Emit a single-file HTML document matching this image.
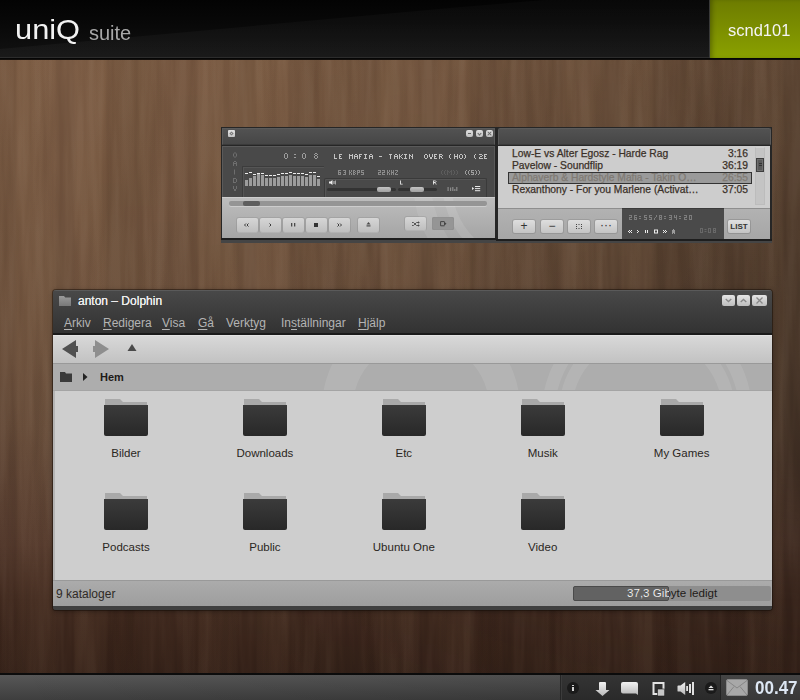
<!DOCTYPE html>
<html><head><meta charset="utf-8">
<style>
*{margin:0;padding:0;box-sizing:border-box}
html,body{width:800px;height:700px;overflow:hidden;background:#3a2a20;font-family:"Liberation Sans",sans-serif}
.a{position:absolute}
#top{left:0;top:0;width:800px;height:58px;overflow:hidden;background:linear-gradient(#030303,#080808 40%,#121212);}
#top .sheen{left:0;top:0;width:711px;height:57px;clip-path:polygon(0 49px,450px 8px,711px -14px,711px 57px,0 57px);background:linear-gradient(rgba(255,255,255,0.02),rgba(255,255,255,0.035))}
#topline{left:0;top:57px;width:800px;height:3px;background:linear-gradient(#2c2c2c 0,#2c2c2c 33%,#060606 34%,#060606 80%,rgba(6,6,6,0.4) 100%)}
#green{left:709px;top:0;width:91px;height:58px;background:linear-gradient(#6d7c00,#8aa100);border-left:1px solid #383838;box-shadow:inset 4px 0 5px -2px rgba(0,0,0,0.3)}
#wood{left:0;top:58px;width:800px;height:616px;background:linear-gradient(to bottom,rgb(122,91,67) 0%,rgb(111,83,62) 42%,rgb(101,75,57) 60%,rgb(84,58,45) 79%,rgb(66,43,32) 88%,rgb(58,37,27) 95%,rgb(53,34,25) 100%)}
#hshade{left:0;top:58px;width:800px;height:616px;background:linear-gradient(to right,#fff 0%,#f5f5f5 35%,#e6e6e6 55%,#cacaca 78%,#aaaaaa 100%);mix-blend-mode:multiply;-webkit-mask-image:linear-gradient(to bottom,rgba(0,0,0,0.75) 0%,#000 40%,#000 65%,rgba(0,0,0,0.25) 100%)}
#taskbar{left:0;top:673px;width:800px;height:27px;background:linear-gradient(to right,rgba(0,0,0,0) 0%,rgba(0,0,0,0.1) 70%),linear-gradient(#0c0c0c 0,#0c0c0c 1.5px,#575757 2px,#3e3e3e 100%)}
.menu{font-size:12px;color:#b4b4b4;line-height:16px}
.menu u{text-decoration:underline;text-underline-offset:2px}
.wb{width:13px;height:11px;border-radius:2px;background:linear-gradient(#e4e4e4,#bdbdbd)}
.lbl{width:100px;text-align:center;font-size:11.5px;color:#2a2622;line-height:14px;padding-top:1px}
.px{font-family:"Liberation Mono",monospace;font-weight:bold;line-height:10px}
.pbt{width:7px;height:7px;border-radius:2px;background:linear-gradient(#e0e0e0,#c0c0c0)}
.pb{top:218px;width:21px;height:14px;border-radius:2px;background:linear-gradient(#d6d6d6,#bfbfbf);box-shadow:0 0 0 1px rgba(0,0,0,0.08),0 1px 0 rgba(255,255,255,0.3);color:#444;font-size:10px;line-height:13px;text-align:center;font-weight:bold}
.pl{font-size:10.3px;line-height:12px;white-space:nowrap;padding-top:1px;-webkit-text-stroke:0.25px currentColor}
.qb{top:220px;width:22px;height:13px;border-radius:2px;background:linear-gradient(#dedede,#c4c4c4);box-shadow:0 0 0 1px rgba(0,0,0,0.1);color:#333;font-size:12px;line-height:13px;text-align:center}
</style></head><body>
<div id="wood" class="a"></div>
<div id="hshade" class="a"></div>
<svg class="a" style="left:0;top:58px;mix-blend-mode:soft-light;opacity:0.1" width="800" height="616"><filter id="wg" x="0" y="0" width="100%" height="100%" color-interpolation-filters="sRGB"><feTurbulence type="fractalNoise" baseFrequency="0.09 0.006" numOctaves="3" seed="7"/><feColorMatrix type="matrix" values="2.2 0 0 0 -0.6  2.2 0 0 0 -0.6  2.2 0 0 0 -0.6  0 0 0 0 1"/></filter><rect width="800" height="616" filter="url(#wg)"/></svg>
<div class="a" style="left:0;top:58px;width:800px;height:616px;background:repeating-linear-gradient(to right,rgba(40,20,8,0.03) 0px,rgba(40,20,8,0.03) 15px,rgba(230,180,130,0.03) 18px,rgba(230,180,130,0.03) 54px,rgba(0,0,0,0) 57px,rgba(0,0,0,0) 73px,rgba(230,180,130,0.035) 76px,rgba(230,180,130,0.035) 105px,rgba(40,20,8,0.045) 108px,rgba(40,20,8,0.045) 136px,rgba(40,20,8,0.012) 139px,rgba(40,20,8,0.012) 179px,rgba(40,20,8,0.03) 182px)"></div>
<div id="top" class="a"><div class="sheen a"></div></div>
<div id="topline" class="a"></div>
<div id="green" class="a"></div>
<div class="a" style="left:15px;top:13px;font-size:28px;color:#f2f2f2;line-height:34px;transform:scaleX(1.1);transform-origin:0 0">uniQ</div>
<div class="a" style="left:89px;top:21px;font-size:20px;color:#a8a8a8;line-height:24px">suite</div>
<div class="a" style="left:728px;top:19.5px;font-size:16.5px;color:#f4f4f4;line-height:20px">scnd101</div>



<!-- PLAYER MAIN -->
<div class="a" style="left:221px;top:127px;width:275px;height:114px;background:#262626"></div>
<div class="a" style="left:222px;top:128px;width:273px;height:17px;background:linear-gradient(#525252,#464646);border:1px solid #5a5a5a;border-bottom:1px solid #3a3a3a"></div>
<div class="a" style="left:228px;top:130px;width:7px;height:7px;background:linear-gradient(#e2e2e2,#c4c4c4);border-radius:1px"></div>
<div class="a" style="left:230px;top:132px;width:3px;height:3px;border:1px solid #777;transform:rotate(45deg)"></div>
<div class="a pbt" style="left:466px;top:130px"><div class="a" style="left:2px;top:3px;width:3px;height:1px;background:#666"></div></div>
<div class="a pbt" style="left:476px;top:130px"><div class="a" style="left:2px;top:2px;width:3px;height:3px;border-right:1px solid #666;border-bottom:1px solid #666;transform:rotate(45deg)"></div></div>
<div class="a pbt" style="left:486px;top:130px"><div class="a" style="left:1px;top:3px;width:5px;height:1px;background:#666;transform:rotate(45deg)"></div><div class="a" style="left:1px;top:3px;width:5px;height:1px;background:#666;transform:rotate(-45deg)"></div></div>
<div class="a" style="left:222px;top:146px;width:273px;height:51px;background:#494949;border:1px solid #5a5a5a;border-bottom:none"></div>
<div class="a" style="left:242px;top:166px;width:82px;height:31px;border-left:1px solid #3c3c3c;border-top:1px solid #3c3c3c"></div>
<div class="a" style="left:243px;top:167px;width:81px;height:30px;border-left:1px solid #555;border-top:1px solid #555"></div>
<div class="a" style="left:245px;top:180px;width:3px;height:6px;background:#9c9c9c"></div><div class="a" style="left:245px;top:173px;width:3px;height:1px;background:#eeeeee"></div><div class="a" style="left:249px;top:178px;width:3px;height:8px;background:#9c9c9c"></div><div class="a" style="left:249px;top:172px;width:3px;height:1px;background:#eeeeee"></div><div class="a" style="left:253px;top:176px;width:3px;height:10px;background:#9c9c9c"></div><div class="a" style="left:253px;top:174px;width:3px;height:1px;background:#eeeeee"></div><div class="a" style="left:257px;top:174px;width:3px;height:12px;background:#9c9c9c"></div><div class="a" style="left:257px;top:173px;width:3px;height:1px;background:#eeeeee"></div><div class="a" style="left:261px;top:175px;width:3px;height:11px;background:#9c9c9c"></div><div class="a" style="left:261px;top:173px;width:3px;height:1px;background:#eeeeee"></div><div class="a" style="left:265px;top:178px;width:3px;height:8px;background:#9c9c9c"></div><div class="a" style="left:265px;top:175px;width:3px;height:1px;background:#eeeeee"></div><div class="a" style="left:269px;top:178px;width:3px;height:8px;background:#9c9c9c"></div><div class="a" style="left:269px;top:175px;width:3px;height:1px;background:#eeeeee"></div><div class="a" style="left:273px;top:178px;width:3px;height:8px;background:#9c9c9c"></div><div class="a" style="left:273px;top:175px;width:3px;height:1px;background:#eeeeee"></div><div class="a" style="left:277px;top:177px;width:3px;height:9px;background:#9c9c9c"></div><div class="a" style="left:277px;top:174px;width:3px;height:1px;background:#eeeeee"></div><div class="a" style="left:281px;top:176px;width:3px;height:10px;background:#9c9c9c"></div><div class="a" style="left:281px;top:173px;width:3px;height:1px;background:#eeeeee"></div><div class="a" style="left:285px;top:176px;width:3px;height:10px;background:#9c9c9c"></div><div class="a" style="left:285px;top:173px;width:3px;height:1px;background:#eeeeee"></div><div class="a" style="left:289px;top:175px;width:3px;height:11px;background:#9c9c9c"></div><div class="a" style="left:289px;top:172px;width:3px;height:1px;background:#eeeeee"></div><div class="a" style="left:293px;top:176px;width:3px;height:10px;background:#9c9c9c"></div><div class="a" style="left:293px;top:173px;width:3px;height:1px;background:#eeeeee"></div><div class="a" style="left:297px;top:176px;width:3px;height:10px;background:#9c9c9c"></div><div class="a" style="left:297px;top:173px;width:3px;height:1px;background:#eeeeee"></div><div class="a" style="left:301px;top:176px;width:3px;height:10px;background:#9c9c9c"></div><div class="a" style="left:301px;top:173px;width:3px;height:1px;background:#eeeeee"></div><div class="a" style="left:305px;top:177px;width:3px;height:9px;background:#9c9c9c"></div><div class="a" style="left:305px;top:174px;width:3px;height:1px;background:#eeeeee"></div><div class="a" style="left:309px;top:175px;width:3px;height:11px;background:#9c9c9c"></div><div class="a" style="left:309px;top:172px;width:3px;height:1px;background:#eeeeee"></div><div class="a" style="left:313px;top:175px;width:3px;height:11px;background:#9c9c9c"></div><div class="a" style="left:313px;top:172px;width:3px;height:1px;background:#eeeeee"></div><div class="a" style="left:317px;top:179px;width:3px;height:7px;background:#9c9c9c"></div><div class="a" style="left:317px;top:176px;width:3px;height:1px;background:#eeeeee"></div>
<div class="a" style="left:324px;top:178px;width:163px;height:19px;border:1px solid #3a3a3a;border-bottom:none;border-radius:2px 2px 0 0;box-shadow:inset 1px 1px 0 #555"></div>
<svg class="a" style="left:329px;top:180px" width="7" height="5" viewBox="0 0 7 5"><path d="M0 1.5h1.5L3.5 0v5L1.5 3.5H0z" fill="#eee"/><rect x="4.5" y="1" width="1" height="3" fill="#ccc"/><rect x="6" y="0.5" width="1" height="4" fill="#aaa"/></svg>
<div class="a" style="left:327px;top:188px;width:69px;height:3px;background:#333;border-radius:2px"></div>
<div class="a" style="left:398px;top:188px;width:39px;height:3px;background:#333;border-radius:2px"></div>
<div class="a" style="left:377px;top:187px;width:14px;height:5px;background:linear-gradient(#c4c4c4,#a0a0a0);border-radius:2px"></div>
<div class="a" style="left:410px;top:187px;width:14px;height:5px;background:linear-gradient(#c4c4c4,#a0a0a0);border-radius:2px"></div>
<svg class="a" style="left:447px;top:186px" width="11" height="6" viewBox="0 0 11 6"><path d="M0.5 1h1.2v4H0.5zM3 1.5h1.2v3.5H3zM5.2 1h1.2v4H5.2zM7.2 3h1.2v2H7.2zM9.2 1h1.2v4H9.2z" fill="#8c8c8c"/></svg>
<svg class="a" style="left:472px;top:186px" width="9" height="6" viewBox="0 0 9 6"><path d="M0 1L2.2 2.5L0 4z" fill="#e8e8e8"/><rect x="3" y="0" width="5.2" height="1" fill="#e8e8e8"/><rect x="3" y="2.1" width="5.2" height="1" fill="#e8e8e8"/><rect x="3" y="4.2" width="5.2" height="1" fill="#e8e8e8"/></svg>
<div class="a" style="left:222px;top:197px;width:273px;height:41px;background:linear-gradient(#bdbdbd,#a5a5a5);border-top:1px solid #cdcdcd;overflow:hidden">
  <div class="a" style="left:191px;top:-137px;width:240px;height:240px;border-radius:50%;border:18px solid rgba(255,255,255,0.08)"></div>
  <div class="a" style="left:220px;top:-108px;width:182px;height:182px;border-radius:50%;border:9px solid rgba(255,255,255,0.1)"></div>
</div>
<div class="a" style="left:229px;top:201px;width:258px;height:5px;background:#959595;border-radius:2px;box-shadow:0 1px 0 rgba(255,255,255,0.3)"></div>
<div class="a" style="left:243px;top:201px;width:17px;height:5px;background:#5e5e5e;border-radius:2px"></div>
<div class="a pb" style="left:237px;top:218px;width:21px;height:14px;background:linear-gradient(#d6d6d6,#bfbfbf)"><svg class="a" style="left:0;top:0" width="21" height="14" viewBox="0 0 21 14"><path d="M9 5.5L7.5 7L9 8.5M11.5 5.5L10 7L11.5 8.5" stroke="#3a3a3a" stroke-width="1" fill="none"/></svg></div>
<div class="a pb" style="left:260px;top:218px;width:21px;height:14px;background:linear-gradient(#d6d6d6,#bfbfbf)"><svg class="a" style="left:0;top:0" width="21" height="14" viewBox="0 0 21 14"><path d="M9.5 5.5L11 7L9.5 8.5" stroke="#3a3a3a" stroke-width="1" fill="none"/></svg></div>
<div class="a pb" style="left:283px;top:218px;width:21px;height:14px;background:linear-gradient(#d6d6d6,#bfbfbf)"><svg class="a" style="left:0;top:0" width="21" height="14" viewBox="0 0 21 14"><rect x="8" y="5" width="1.3" height="3.5" fill="#4a4a4a"/><rect x="11" y="5" width="1.3" height="3.5" fill="#4a4a4a"/></svg></div>
<div class="a pb" style="left:306px;top:218px;width:21px;height:14px;background:linear-gradient(#d6d6d6,#bfbfbf)"><svg class="a" style="left:0;top:0" width="21" height="14" viewBox="0 0 21 14"><rect x="8" y="5" width="4" height="4" fill="#333"/></svg></div>
<div class="a pb" style="left:329px;top:218px;width:21px;height:14px;background:linear-gradient(#d6d6d6,#bfbfbf)"><svg class="a" style="left:0;top:0" width="21" height="14" viewBox="0 0 21 14"><path d="M8.5 5.5L10 7L8.5 8.5M11 5.5L12.5 7L11 8.5" stroke="#3a3a3a" stroke-width="1" fill="none"/></svg></div>
<div class="a pb" style="left:358px;top:218px;width:21px;height:14px;background:linear-gradient(#d6d6d6,#bfbfbf)"><svg class="a" style="left:0;top:0" width="21" height="14" viewBox="0 0 21 14"><path d="M10.5 4L12.5 6.5H8.5z" fill="#4a4a4a"/><rect x="8.5" y="7.3" width="4" height="1.2" fill="#4a4a4a"/></svg></div>
<div class="a pb" style="left:405px;top:217px;width:21px;height:13px;background:linear-gradient(#d6d6d6,#bfbfbf)"><svg class="a" style="left:0;top:0" width="21" height="13" viewBox="0 0 21 13"><path d="M7 5.5h1.5l3 3H14M7 8.5h1.5l3-3H14" stroke="#4a4a4a" stroke-width="0.9" fill="none"/><path d="M13 4.2l1.8 1.3-1.8 1.3zM13 7.2l1.8 1.3-1.8 1.3z" fill="#4a4a4a"/></svg></div>
<div class="a" style="left:432px;top:217px;width:22px;height:13px;background:#959595;border-radius:2px;box-shadow:inset 0 0 1px rgba(0,0,0,0.25)"><svg class="a" style="left:0;top:0" width="22" height="13" viewBox="0 0 22 13"><path d="M12.5 4.6H8.6v4.2h3.9" stroke="#444" stroke-width="1" fill="none"/><path d="M12 4.6v4.2l2.5-2.1z" fill="#444"/></svg></div>
<div class="a" style="left:221px;top:238px;width:275px;height:2px;background:#1e1e1e"></div><div class="a" style="left:221px;top:240px;width:275px;height:2.5px;background:#454545"></div>


<svg class="a" style="left:0;top:0;pointer-events:none" width="800" height="700"><path d="M234.00 152.50h1.00v1.00h-1.00zM235.00 152.50h1.00v1.00h-1.00zM233.00 153.50h1.00v1.00h-1.00zM236.00 153.50h1.00v1.00h-1.00zM233.00 154.50h1.00v1.00h-1.00zM236.00 154.50h1.00v1.00h-1.00zM233.00 155.50h1.00v1.00h-1.00zM236.00 155.50h1.00v1.00h-1.00zM234.00 156.50h1.00v1.00h-1.00zM235.00 156.50h1.00v1.00h-1.00z" fill="#6e6e6e" fill-opacity="1"/><path d="M234.00 161.00h1.00v1.00h-1.00zM235.00 161.00h1.00v1.00h-1.00zM233.00 162.00h1.00v1.00h-1.00zM236.00 162.00h1.00v1.00h-1.00zM233.00 163.00h1.00v1.00h-1.00zM234.00 163.00h1.00v1.00h-1.00zM235.00 163.00h1.00v1.00h-1.00zM236.00 163.00h1.00v1.00h-1.00zM233.00 164.00h1.00v1.00h-1.00zM236.00 164.00h1.00v1.00h-1.00zM233.00 165.00h1.00v1.00h-1.00zM236.00 165.00h1.00v1.00h-1.00z" fill="#6e6e6e" fill-opacity="1"/><path d="M234.00 169.50h1.00v1.00h-1.00zM234.00 170.50h1.00v1.00h-1.00zM234.00 171.50h1.00v1.00h-1.00zM234.00 172.50h1.00v1.00h-1.00zM234.00 173.50h1.00v1.00h-1.00z" fill="#6e6e6e" fill-opacity="1"/><path d="M233.00 178.00h1.00v1.00h-1.00zM234.00 178.00h1.00v1.00h-1.00zM235.00 178.00h1.00v1.00h-1.00zM233.00 179.00h1.00v1.00h-1.00zM236.00 179.00h1.00v1.00h-1.00zM233.00 180.00h1.00v1.00h-1.00zM236.00 180.00h1.00v1.00h-1.00zM233.00 181.00h1.00v1.00h-1.00zM236.00 181.00h1.00v1.00h-1.00zM233.00 182.00h1.00v1.00h-1.00zM234.00 182.00h1.00v1.00h-1.00zM235.00 182.00h1.00v1.00h-1.00z" fill="#6e6e6e" fill-opacity="1"/><path d="M233.00 186.00h1.00v1.00h-1.00zM236.00 186.00h1.00v1.00h-1.00zM233.00 187.00h1.00v1.00h-1.00zM236.00 187.00h1.00v1.00h-1.00zM233.00 188.00h1.00v1.00h-1.00zM236.00 188.00h1.00v1.00h-1.00zM234.00 189.00h1.00v1.00h-1.00zM235.00 189.00h1.00v1.00h-1.00zM234.00 190.00h1.00v1.00h-1.00zM235.00 190.00h1.00v1.00h-1.00z" fill="#6e6e6e" fill-opacity="1"/><path d="M285.00 153.00h1.00v1.00h-1.00zM286.00 153.00h1.00v1.00h-1.00zM284.00 154.00h1.00v1.00h-1.00zM287.00 154.00h1.00v1.00h-1.00zM284.00 155.00h1.00v1.00h-1.00zM287.00 155.00h1.00v1.00h-1.00zM284.00 156.00h1.00v1.00h-1.00zM287.00 156.00h1.00v1.00h-1.00zM284.00 157.00h1.00v1.00h-1.00zM287.00 157.00h1.00v1.00h-1.00zM285.00 158.00h1.00v1.00h-1.00zM286.00 158.00h1.00v1.00h-1.00z" fill="#9c9c9c" fill-opacity="1"/><path d="M294.00 154.00h1.00v1.00h-1.00zM295.00 154.00h1.00v1.00h-1.00zM294.00 157.00h1.00v1.00h-1.00zM295.00 157.00h1.00v1.00h-1.00z" fill="#9c9c9c" fill-opacity="1"/><path d="M303.00 153.00h1.00v1.00h-1.00zM304.00 153.00h1.00v1.00h-1.00zM302.00 154.00h1.00v1.00h-1.00zM305.00 154.00h1.00v1.00h-1.00zM302.00 155.00h1.00v1.00h-1.00zM305.00 155.00h1.00v1.00h-1.00zM302.00 156.00h1.00v1.00h-1.00zM305.00 156.00h1.00v1.00h-1.00zM302.00 157.00h1.00v1.00h-1.00zM305.00 157.00h1.00v1.00h-1.00zM303.00 158.00h1.00v1.00h-1.00zM304.00 158.00h1.00v1.00h-1.00z" fill="#9c9c9c" fill-opacity="1"/><path d="M315.00 153.00h1.00v1.00h-1.00zM316.00 153.00h1.00v1.00h-1.00zM314.00 154.00h1.00v1.00h-1.00zM317.00 154.00h1.00v1.00h-1.00zM315.00 155.00h1.00v1.00h-1.00zM316.00 155.00h1.00v1.00h-1.00zM314.00 156.00h1.00v1.00h-1.00zM317.00 156.00h1.00v1.00h-1.00zM314.00 157.00h1.00v1.00h-1.00zM317.00 157.00h1.00v1.00h-1.00zM315.00 158.00h1.00v1.00h-1.00zM316.00 158.00h1.00v1.00h-1.00z" fill="#9c9c9c" fill-opacity="1"/><path d="M334.00 154.00h1.00v1.00h-1.00zM334.00 155.00h1.00v1.00h-1.00zM334.00 156.00h1.00v1.00h-1.00zM334.00 157.00h1.00v1.00h-1.00zM334.00 158.00h1.00v1.00h-1.00zM335.00 158.00h1.00v1.00h-1.00zM336.00 158.00h1.00v1.00h-1.00zM339.00 154.00h1.00v1.00h-1.00zM340.00 154.00h1.00v1.00h-1.00zM341.00 154.00h1.00v1.00h-1.00zM339.00 155.00h1.00v1.00h-1.00zM339.00 156.00h1.00v1.00h-1.00zM340.00 156.00h1.00v1.00h-1.00zM339.00 157.00h1.00v1.00h-1.00zM339.00 158.00h1.00v1.00h-1.00zM340.00 158.00h1.00v1.00h-1.00zM341.00 158.00h1.00v1.00h-1.00zM349.00 154.00h1.00v1.00h-1.00zM352.00 154.00h1.00v1.00h-1.00zM349.00 155.00h1.00v1.00h-1.00zM350.00 155.00h1.00v1.00h-1.00zM351.00 155.00h1.00v1.00h-1.00zM352.00 155.00h1.00v1.00h-1.00zM349.00 156.00h1.00v1.00h-1.00zM352.00 156.00h1.00v1.00h-1.00zM349.00 157.00h1.00v1.00h-1.00zM352.00 157.00h1.00v1.00h-1.00zM349.00 158.00h1.00v1.00h-1.00zM352.00 158.00h1.00v1.00h-1.00zM355.00 154.00h1.00v1.00h-1.00zM356.00 154.00h1.00v1.00h-1.00zM354.00 155.00h1.00v1.00h-1.00zM357.00 155.00h1.00v1.00h-1.00zM354.00 156.00h1.00v1.00h-1.00zM355.00 156.00h1.00v1.00h-1.00zM356.00 156.00h1.00v1.00h-1.00zM357.00 156.00h1.00v1.00h-1.00zM354.00 157.00h1.00v1.00h-1.00zM357.00 157.00h1.00v1.00h-1.00zM354.00 158.00h1.00v1.00h-1.00zM357.00 158.00h1.00v1.00h-1.00zM359.00 154.00h1.00v1.00h-1.00zM360.00 154.00h1.00v1.00h-1.00zM361.00 154.00h1.00v1.00h-1.00zM359.00 155.00h1.00v1.00h-1.00zM359.00 156.00h1.00v1.00h-1.00zM360.00 156.00h1.00v1.00h-1.00zM359.00 157.00h1.00v1.00h-1.00zM359.00 158.00h1.00v1.00h-1.00zM364.00 154.00h1.00v1.00h-1.00zM365.00 154.00h1.00v1.00h-1.00zM366.00 154.00h1.00v1.00h-1.00zM365.00 155.00h1.00v1.00h-1.00zM365.00 156.00h1.00v1.00h-1.00zM365.00 157.00h1.00v1.00h-1.00zM364.00 158.00h1.00v1.00h-1.00zM365.00 158.00h1.00v1.00h-1.00zM366.00 158.00h1.00v1.00h-1.00zM370.00 154.00h1.00v1.00h-1.00zM371.00 154.00h1.00v1.00h-1.00zM369.00 155.00h1.00v1.00h-1.00zM372.00 155.00h1.00v1.00h-1.00zM369.00 156.00h1.00v1.00h-1.00zM370.00 156.00h1.00v1.00h-1.00zM371.00 156.00h1.00v1.00h-1.00zM372.00 156.00h1.00v1.00h-1.00zM369.00 157.00h1.00v1.00h-1.00zM372.00 157.00h1.00v1.00h-1.00zM369.00 158.00h1.00v1.00h-1.00zM372.00 158.00h1.00v1.00h-1.00zM379.00 156.00h1.00v1.00h-1.00zM380.00 156.00h1.00v1.00h-1.00zM381.00 156.00h1.00v1.00h-1.00zM389.00 154.00h1.00v1.00h-1.00zM390.00 154.00h1.00v1.00h-1.00zM391.00 154.00h1.00v1.00h-1.00zM390.00 155.00h1.00v1.00h-1.00zM390.00 156.00h1.00v1.00h-1.00zM390.00 157.00h1.00v1.00h-1.00zM390.00 158.00h1.00v1.00h-1.00zM395.00 154.00h1.00v1.00h-1.00zM396.00 154.00h1.00v1.00h-1.00zM394.00 155.00h1.00v1.00h-1.00zM397.00 155.00h1.00v1.00h-1.00zM394.00 156.00h1.00v1.00h-1.00zM395.00 156.00h1.00v1.00h-1.00zM396.00 156.00h1.00v1.00h-1.00zM397.00 156.00h1.00v1.00h-1.00zM394.00 157.00h1.00v1.00h-1.00zM397.00 157.00h1.00v1.00h-1.00zM394.00 158.00h1.00v1.00h-1.00zM397.00 158.00h1.00v1.00h-1.00zM399.00 154.00h1.00v1.00h-1.00zM402.00 154.00h1.00v1.00h-1.00zM399.00 155.00h1.00v1.00h-1.00zM401.00 155.00h1.00v1.00h-1.00zM399.00 156.00h1.00v1.00h-1.00zM400.00 156.00h1.00v1.00h-1.00zM399.00 157.00h1.00v1.00h-1.00zM401.00 157.00h1.00v1.00h-1.00zM399.00 158.00h1.00v1.00h-1.00zM402.00 158.00h1.00v1.00h-1.00zM404.00 154.00h1.00v1.00h-1.00zM405.00 154.00h1.00v1.00h-1.00zM406.00 154.00h1.00v1.00h-1.00zM405.00 155.00h1.00v1.00h-1.00zM405.00 156.00h1.00v1.00h-1.00zM405.00 157.00h1.00v1.00h-1.00zM404.00 158.00h1.00v1.00h-1.00zM405.00 158.00h1.00v1.00h-1.00zM406.00 158.00h1.00v1.00h-1.00zM409.00 154.00h1.00v1.00h-1.00zM412.00 154.00h1.00v1.00h-1.00zM409.00 155.00h1.00v1.00h-1.00zM410.00 155.00h1.00v1.00h-1.00zM412.00 155.00h1.00v1.00h-1.00zM409.00 156.00h1.00v1.00h-1.00zM411.00 156.00h1.00v1.00h-1.00zM412.00 156.00h1.00v1.00h-1.00zM409.00 157.00h1.00v1.00h-1.00zM412.00 157.00h1.00v1.00h-1.00zM409.00 158.00h1.00v1.00h-1.00zM412.00 158.00h1.00v1.00h-1.00zM425.00 154.00h1.00v1.00h-1.00zM426.00 154.00h1.00v1.00h-1.00zM424.00 155.00h1.00v1.00h-1.00zM427.00 155.00h1.00v1.00h-1.00zM424.00 156.00h1.00v1.00h-1.00zM427.00 156.00h1.00v1.00h-1.00zM424.00 157.00h1.00v1.00h-1.00zM427.00 157.00h1.00v1.00h-1.00zM425.00 158.00h1.00v1.00h-1.00zM426.00 158.00h1.00v1.00h-1.00zM429.00 154.00h1.00v1.00h-1.00zM432.00 154.00h1.00v1.00h-1.00zM429.00 155.00h1.00v1.00h-1.00zM432.00 155.00h1.00v1.00h-1.00zM429.00 156.00h1.00v1.00h-1.00zM432.00 156.00h1.00v1.00h-1.00zM430.00 157.00h1.00v1.00h-1.00zM431.00 157.00h1.00v1.00h-1.00zM430.00 158.00h1.00v1.00h-1.00zM431.00 158.00h1.00v1.00h-1.00zM434.00 154.00h1.00v1.00h-1.00zM435.00 154.00h1.00v1.00h-1.00zM436.00 154.00h1.00v1.00h-1.00zM434.00 155.00h1.00v1.00h-1.00zM434.00 156.00h1.00v1.00h-1.00zM435.00 156.00h1.00v1.00h-1.00zM434.00 157.00h1.00v1.00h-1.00zM434.00 158.00h1.00v1.00h-1.00zM435.00 158.00h1.00v1.00h-1.00zM436.00 158.00h1.00v1.00h-1.00zM439.00 154.00h1.00v1.00h-1.00zM440.00 154.00h1.00v1.00h-1.00zM441.00 154.00h1.00v1.00h-1.00zM439.00 155.00h1.00v1.00h-1.00zM442.00 155.00h1.00v1.00h-1.00zM439.00 156.00h1.00v1.00h-1.00zM440.00 156.00h1.00v1.00h-1.00zM441.00 156.00h1.00v1.00h-1.00zM439.00 157.00h1.00v1.00h-1.00zM441.00 157.00h1.00v1.00h-1.00zM439.00 158.00h1.00v1.00h-1.00zM442.00 158.00h1.00v1.00h-1.00zM450.00 154.00h1.00v1.00h-1.00zM449.00 155.00h1.00v1.00h-1.00zM449.00 156.00h1.00v1.00h-1.00zM449.00 157.00h1.00v1.00h-1.00zM450.00 158.00h1.00v1.00h-1.00zM454.00 154.00h1.00v1.00h-1.00zM457.00 154.00h1.00v1.00h-1.00zM454.00 155.00h1.00v1.00h-1.00zM457.00 155.00h1.00v1.00h-1.00zM454.00 156.00h1.00v1.00h-1.00zM455.00 156.00h1.00v1.00h-1.00zM456.00 156.00h1.00v1.00h-1.00zM457.00 156.00h1.00v1.00h-1.00zM454.00 157.00h1.00v1.00h-1.00zM457.00 157.00h1.00v1.00h-1.00zM454.00 158.00h1.00v1.00h-1.00zM457.00 158.00h1.00v1.00h-1.00zM460.00 154.00h1.00v1.00h-1.00zM461.00 154.00h1.00v1.00h-1.00zM459.00 155.00h1.00v1.00h-1.00zM462.00 155.00h1.00v1.00h-1.00zM459.00 156.00h1.00v1.00h-1.00zM462.00 156.00h1.00v1.00h-1.00zM459.00 157.00h1.00v1.00h-1.00zM462.00 157.00h1.00v1.00h-1.00zM460.00 158.00h1.00v1.00h-1.00zM461.00 158.00h1.00v1.00h-1.00zM464.00 154.00h1.00v1.00h-1.00zM465.00 155.00h1.00v1.00h-1.00zM465.00 156.00h1.00v1.00h-1.00zM465.00 157.00h1.00v1.00h-1.00zM464.00 158.00h1.00v1.00h-1.00zM475.00 154.00h1.00v1.00h-1.00zM474.00 155.00h1.00v1.00h-1.00zM474.00 156.00h1.00v1.00h-1.00zM474.00 157.00h1.00v1.00h-1.00zM475.00 158.00h1.00v1.00h-1.00zM479.00 154.00h1.00v1.00h-1.00zM480.00 154.00h1.00v1.00h-1.00zM481.00 154.00h1.00v1.00h-1.00zM482.00 155.00h1.00v1.00h-1.00zM480.00 156.00h1.00v1.00h-1.00zM481.00 156.00h1.00v1.00h-1.00zM479.00 157.00h1.00v1.00h-1.00zM479.00 158.00h1.00v1.00h-1.00zM480.00 158.00h1.00v1.00h-1.00zM481.00 158.00h1.00v1.00h-1.00zM482.00 158.00h1.00v1.00h-1.00zM484.00 154.00h1.00v1.00h-1.00zM485.00 154.00h1.00v1.00h-1.00zM486.00 154.00h1.00v1.00h-1.00zM484.00 155.00h1.00v1.00h-1.00zM484.00 156.00h1.00v1.00h-1.00zM485.00 156.00h1.00v1.00h-1.00zM484.00 157.00h1.00v1.00h-1.00zM484.00 158.00h1.00v1.00h-1.00zM485.00 158.00h1.00v1.00h-1.00zM486.00 158.00h1.00v1.00h-1.00z" fill="#c2c2c2" fill-opacity="1"/><path d="M338.00 170.00h1.00v1.00h-1.00zM339.00 170.00h1.00v1.00h-1.00zM340.00 170.00h1.00v1.00h-1.00zM338.00 171.00h1.00v1.00h-1.00zM338.00 172.00h1.00v1.00h-1.00zM339.00 172.00h1.00v1.00h-1.00zM340.00 172.00h1.00v1.00h-1.00zM338.00 173.00h1.00v1.00h-1.00zM340.00 173.00h1.00v1.00h-1.00zM338.00 174.00h1.00v1.00h-1.00zM339.00 174.00h1.00v1.00h-1.00zM340.00 174.00h1.00v1.00h-1.00z" fill="#8a8a8a" fill-opacity="1"/><path d="M343.00 170.00h1.00v1.00h-1.00zM344.00 170.00h1.00v1.00h-1.00zM345.00 170.00h1.00v1.00h-1.00zM345.00 171.00h1.00v1.00h-1.00zM344.00 172.00h1.00v1.00h-1.00zM345.00 172.00h1.00v1.00h-1.00zM345.00 173.00h1.00v1.00h-1.00zM343.00 174.00h1.00v1.00h-1.00zM344.00 174.00h1.00v1.00h-1.00zM345.00 174.00h1.00v1.00h-1.00z" fill="#8a8a8a" fill-opacity="1"/><path d="M349.00 170.00h1.00v1.00h-1.00zM351.00 170.00h1.00v1.00h-1.00zM349.00 171.00h1.00v1.00h-1.00zM351.00 171.00h1.00v1.00h-1.00zM349.00 172.00h1.00v1.00h-1.00zM350.00 172.00h1.00v1.00h-1.00zM349.00 173.00h1.00v1.00h-1.00zM351.00 173.00h1.00v1.00h-1.00zM349.00 174.00h1.00v1.00h-1.00zM351.00 174.00h1.00v1.00h-1.00z" fill="#8a8a8a" fill-opacity="1"/><path d="M353.00 170.00h1.00v1.00h-1.00zM354.00 170.00h1.00v1.00h-1.00zM353.00 171.00h1.00v1.00h-1.00zM355.00 171.00h1.00v1.00h-1.00zM353.00 172.00h1.00v1.00h-1.00zM354.00 172.00h1.00v1.00h-1.00zM353.00 173.00h1.00v1.00h-1.00zM355.00 173.00h1.00v1.00h-1.00zM353.00 174.00h1.00v1.00h-1.00zM354.00 174.00h1.00v1.00h-1.00z" fill="#8a8a8a" fill-opacity="1"/><path d="M357.00 170.00h1.00v1.00h-1.00zM358.00 170.00h1.00v1.00h-1.00zM359.00 170.00h1.00v1.00h-1.00zM357.00 171.00h1.00v1.00h-1.00zM359.00 171.00h1.00v1.00h-1.00zM357.00 172.00h1.00v1.00h-1.00zM358.00 172.00h1.00v1.00h-1.00zM359.00 172.00h1.00v1.00h-1.00zM357.00 173.00h1.00v1.00h-1.00zM357.00 174.00h1.00v1.00h-1.00z" fill="#8a8a8a" fill-opacity="1"/><path d="M361.00 170.00h1.00v1.00h-1.00zM362.00 170.00h1.00v1.00h-1.00zM363.00 170.00h1.00v1.00h-1.00zM361.00 171.00h1.00v1.00h-1.00zM361.00 172.00h1.00v1.00h-1.00zM362.00 172.00h1.00v1.00h-1.00zM363.00 172.00h1.00v1.00h-1.00zM363.00 173.00h1.00v1.00h-1.00zM361.00 174.00h1.00v1.00h-1.00zM362.00 174.00h1.00v1.00h-1.00zM363.00 174.00h1.00v1.00h-1.00z" fill="#8a8a8a" fill-opacity="1"/><path d="M378.00 170.00h1.00v1.00h-1.00zM379.00 170.00h1.00v1.00h-1.00zM380.00 170.00h1.00v1.00h-1.00zM380.00 171.00h1.00v1.00h-1.00zM378.00 172.00h1.00v1.00h-1.00zM379.00 172.00h1.00v1.00h-1.00zM380.00 172.00h1.00v1.00h-1.00zM378.00 173.00h1.00v1.00h-1.00zM378.00 174.00h1.00v1.00h-1.00zM379.00 174.00h1.00v1.00h-1.00zM380.00 174.00h1.00v1.00h-1.00z" fill="#8a8a8a" fill-opacity="1"/><path d="M382.00 170.00h1.00v1.00h-1.00zM383.00 170.00h1.00v1.00h-1.00zM384.00 170.00h1.00v1.00h-1.00zM384.00 171.00h1.00v1.00h-1.00zM382.00 172.00h1.00v1.00h-1.00zM383.00 172.00h1.00v1.00h-1.00zM384.00 172.00h1.00v1.00h-1.00zM382.00 173.00h1.00v1.00h-1.00zM382.00 174.00h1.00v1.00h-1.00zM383.00 174.00h1.00v1.00h-1.00zM384.00 174.00h1.00v1.00h-1.00z" fill="#8a8a8a" fill-opacity="1"/><path d="M387.00 170.00h1.00v1.00h-1.00zM389.00 170.00h1.00v1.00h-1.00zM387.00 171.00h1.00v1.00h-1.00zM389.00 171.00h1.00v1.00h-1.00zM387.00 172.00h1.00v1.00h-1.00zM388.00 172.00h1.00v1.00h-1.00zM387.00 173.00h1.00v1.00h-1.00zM389.00 173.00h1.00v1.00h-1.00zM387.00 174.00h1.00v1.00h-1.00zM389.00 174.00h1.00v1.00h-1.00z" fill="#8a8a8a" fill-opacity="1"/><path d="M391.00 170.00h1.00v1.00h-1.00zM393.00 170.00h1.00v1.00h-1.00zM391.00 171.00h1.00v1.00h-1.00zM393.00 171.00h1.00v1.00h-1.00zM391.00 172.00h1.00v1.00h-1.00zM392.00 172.00h1.00v1.00h-1.00zM393.00 172.00h1.00v1.00h-1.00zM391.00 173.00h1.00v1.00h-1.00zM393.00 173.00h1.00v1.00h-1.00zM391.00 174.00h1.00v1.00h-1.00zM393.00 174.00h1.00v1.00h-1.00z" fill="#8a8a8a" fill-opacity="1"/><path d="M395.00 170.00h1.00v1.00h-1.00zM396.00 170.00h1.00v1.00h-1.00zM397.00 170.00h1.00v1.00h-1.00zM397.00 171.00h1.00v1.00h-1.00zM396.00 172.00h1.00v1.00h-1.00zM395.00 173.00h1.00v1.00h-1.00zM395.00 174.00h1.00v1.00h-1.00zM396.00 174.00h1.00v1.00h-1.00zM397.00 174.00h1.00v1.00h-1.00z" fill="#8a8a8a" fill-opacity="1"/><path d="M442.00 170.00h1.00v1.00h-1.00zM441.00 171.00h1.00v1.00h-1.00zM441.00 172.00h1.00v1.00h-1.00zM441.00 173.00h1.00v1.00h-1.00zM442.00 174.00h1.00v1.00h-1.00z" fill="#5c5c5c" fill-opacity="1"/><path d="M445.00 170.00h1.00v1.00h-1.00zM444.00 171.00h1.00v1.00h-1.00zM444.00 172.00h1.00v1.00h-1.00zM444.00 173.00h1.00v1.00h-1.00zM445.00 174.00h1.00v1.00h-1.00z" fill="#5c5c5c" fill-opacity="1"/><path d="M447.00 170.00h1.00v1.00h-1.00zM451.00 170.00h1.00v1.00h-1.00zM447.00 171.00h1.00v1.00h-1.00zM448.00 171.00h1.00v1.00h-1.00zM450.00 171.00h1.00v1.00h-1.00zM451.00 171.00h1.00v1.00h-1.00zM447.00 172.00h1.00v1.00h-1.00zM449.00 172.00h1.00v1.00h-1.00zM451.00 172.00h1.00v1.00h-1.00zM447.00 173.00h1.00v1.00h-1.00zM451.00 173.00h1.00v1.00h-1.00zM447.00 174.00h1.00v1.00h-1.00zM451.00 174.00h1.00v1.00h-1.00z" fill="#5c5c5c" fill-opacity="1"/><path d="M453.00 170.00h1.00v1.00h-1.00zM454.00 171.00h1.00v1.00h-1.00zM454.00 172.00h1.00v1.00h-1.00zM454.00 173.00h1.00v1.00h-1.00zM453.00 174.00h1.00v1.00h-1.00z" fill="#5c5c5c" fill-opacity="1"/><path d="M456.00 170.00h1.00v1.00h-1.00zM457.00 171.00h1.00v1.00h-1.00zM457.00 172.00h1.00v1.00h-1.00zM457.00 173.00h1.00v1.00h-1.00zM456.00 174.00h1.00v1.00h-1.00z" fill="#5c5c5c" fill-opacity="1"/><path d="M466.00 170.00h1.00v1.00h-1.00zM465.00 171.00h1.00v1.00h-1.00zM465.00 172.00h1.00v1.00h-1.00zM465.00 173.00h1.00v1.00h-1.00zM466.00 174.00h1.00v1.00h-1.00z" fill="#9c9c9c" fill-opacity="1"/><path d="M469.00 170.00h1.00v1.00h-1.00zM468.00 171.00h1.00v1.00h-1.00zM468.00 172.00h1.00v1.00h-1.00zM468.00 173.00h1.00v1.00h-1.00zM469.00 174.00h1.00v1.00h-1.00z" fill="#9c9c9c" fill-opacity="1"/><path d="M471.00 170.00h1.00v1.00h-1.00zM472.00 170.00h1.00v1.00h-1.00zM473.00 170.00h1.00v1.00h-1.00zM471.00 171.00h1.00v1.00h-1.00zM471.00 172.00h1.00v1.00h-1.00zM472.00 172.00h1.00v1.00h-1.00zM473.00 172.00h1.00v1.00h-1.00zM473.00 173.00h1.00v1.00h-1.00zM471.00 174.00h1.00v1.00h-1.00zM472.00 174.00h1.00v1.00h-1.00zM473.00 174.00h1.00v1.00h-1.00z" fill="#9c9c9c" fill-opacity="1"/><path d="M475.00 170.00h1.00v1.00h-1.00zM476.00 171.00h1.00v1.00h-1.00zM476.00 172.00h1.00v1.00h-1.00zM476.00 173.00h1.00v1.00h-1.00zM475.00 174.00h1.00v1.00h-1.00z" fill="#9c9c9c" fill-opacity="1"/><path d="M478.00 170.00h1.00v1.00h-1.00zM479.00 171.00h1.00v1.00h-1.00zM479.00 172.00h1.00v1.00h-1.00zM479.00 173.00h1.00v1.00h-1.00zM478.00 174.00h1.00v1.00h-1.00z" fill="#9c9c9c" fill-opacity="1"/><path d="M400.00 180.50h0.90v0.80h-0.90zM400.00 181.30h0.90v0.80h-0.90zM400.00 182.10h0.90v0.80h-0.90zM400.00 182.90h0.90v0.80h-0.90zM400.00 183.70h0.90v0.80h-0.90zM400.90 183.70h0.90v0.80h-0.90zM401.80 183.70h0.90v0.80h-0.90z" fill="#e6e6e6" fill-opacity="1"/><path d="M433.00 180.50h0.90v0.80h-0.90zM433.90 180.50h0.90v0.80h-0.90zM434.80 180.50h0.90v0.80h-0.90zM433.00 181.30h0.90v0.80h-0.90zM435.70 181.30h0.90v0.80h-0.90zM433.00 182.10h0.90v0.80h-0.90zM433.90 182.10h0.90v0.80h-0.90zM434.80 182.10h0.90v0.80h-0.90zM433.00 182.90h0.90v0.80h-0.90zM434.80 182.90h0.90v0.80h-0.90zM433.00 183.70h0.90v0.80h-0.90zM435.70 183.70h0.90v0.80h-0.90z" fill="#e6e6e6" fill-opacity="1"/></svg>
<!-- PLAYLIST -->
<div class="a" style="left:496px;top:127px;width:276px;height:114px;background:#262626"></div>
<div class="a" style="left:498px;top:128px;width:273px;height:17px;background:linear-gradient(#525252,#464646);border:1px solid #5a5a5a;border-bottom:1px solid #3a3a3a;border-radius:2px 2px 0 0"></div>
<div class="a" style="left:498px;top:146px;width:272px;height:62px;background:#cdcdcd"></div>
<div class="a" style="left:755px;top:147px;width:10px;height:58px;background:#c4c4c4;border:1px solid #bcbcbc;border-top-color:#d0d0d0"></div>
<div class="a" style="left:756px;top:158px;width:8px;height:14px;background:#5a5a5a;border:1px solid #3e3e3e;box-shadow:inset 0 0 0 1px #6e6e6e"></div>
<div class="a" style="left:759px;top:163px;width:3px;height:3px;border-top:1px solid #333;border-bottom:1px solid #333"></div>
<div class="a" style="left:508px;top:172px;width:244px;height:12px;background:#9a9a9a;border:1px solid #333"></div>
<div class="a pl" style="left:512px;top:147px;color:#3a3028">Low-E vs Alter Egosz - Harde Rag</div><div class="a pl" style="left:699px;top:147px;width:49px;text-align:right;color:#3a3028">3:16</div>
<div class="a pl" style="left:512px;top:159px;color:#3a3028">Pavelow - Soundflip</div><div class="a pl" style="left:699px;top:159px;width:49px;text-align:right;color:#3a3028">36:19</div>
<div class="a pl" style="left:512px;top:171px;color:#807a74">Alphaverb &amp; Hardstyle Mafia - Takin O…</div><div class="a pl" style="left:699px;top:171px;width:49px;text-align:right;color:#807a74">26:55</div>
<div class="a pl" style="left:512px;top:183px;color:#3a3028">Rexanthony - For you Marlene (Activat…</div><div class="a pl" style="left:699px;top:183px;width:49px;text-align:right;color:#3a3028">37:05</div>

<div class="a" style="left:498px;top:207.5px;width:272px;height:31.5px;background:linear-gradient(#b2b2b2,#a6a6a6);border-top:1.5px solid #8e8e8e"></div>
<div class="a qb" style="left:513px">+</div>
<div class="a qb" style="left:541px">&minus;</div>
<div class="a qb" style="left:568px"><svg class="a" style="left:8px;top:4px" width="6" height="5" viewBox="0 0 6 5"><path d="M0 0h1v1H0zM2.5 0h1v1h-1zM5 0h1v1H5zM0 2h1v1H0zM5 2h1v1H5zM0 4h1v1H0zM2.5 4h1v1h-1zM5 4h1v1H5z" fill="#444"/></svg></div>
<div class="a qb" style="left:595px;line-height:10px">&middot;&middot;&middot;</div>
<div class="a" style="left:622px;top:208px;width:102px;height:31px;background:#4a4a4a;border-top:1px solid #3a3a3a"></div>
<svg class="a" style="left:0;top:0;pointer-events:none" width="800" height="700"><path d="M629.00 215.00h1.00v1.00h-1.00zM630.00 215.00h1.00v1.00h-1.00zM631.00 215.00h1.00v1.00h-1.00zM631.00 216.00h1.00v1.00h-1.00zM629.00 217.00h1.00v1.00h-1.00zM630.00 217.00h1.00v1.00h-1.00zM631.00 217.00h1.00v1.00h-1.00zM629.00 218.00h1.00v1.00h-1.00zM629.00 219.00h1.00v1.00h-1.00zM630.00 219.00h1.00v1.00h-1.00zM631.00 219.00h1.00v1.00h-1.00zM634.00 215.00h1.00v1.00h-1.00zM635.00 215.00h1.00v1.00h-1.00zM636.00 215.00h1.00v1.00h-1.00zM634.00 216.00h1.00v1.00h-1.00zM634.00 217.00h1.00v1.00h-1.00zM635.00 217.00h1.00v1.00h-1.00zM636.00 217.00h1.00v1.00h-1.00zM634.00 218.00h1.00v1.00h-1.00zM636.00 218.00h1.00v1.00h-1.00zM634.00 219.00h1.00v1.00h-1.00zM635.00 219.00h1.00v1.00h-1.00zM636.00 219.00h1.00v1.00h-1.00zM639.00 216.00h1.00v1.00h-1.00zM640.00 216.00h1.00v1.00h-1.00zM639.00 218.00h1.00v1.00h-1.00zM640.00 218.00h1.00v1.00h-1.00zM644.00 215.00h1.00v1.00h-1.00zM645.00 215.00h1.00v1.00h-1.00zM646.00 215.00h1.00v1.00h-1.00zM644.00 216.00h1.00v1.00h-1.00zM644.00 217.00h1.00v1.00h-1.00zM645.00 217.00h1.00v1.00h-1.00zM646.00 217.00h1.00v1.00h-1.00zM646.00 218.00h1.00v1.00h-1.00zM644.00 219.00h1.00v1.00h-1.00zM645.00 219.00h1.00v1.00h-1.00zM646.00 219.00h1.00v1.00h-1.00zM649.00 215.00h1.00v1.00h-1.00zM650.00 215.00h1.00v1.00h-1.00zM651.00 215.00h1.00v1.00h-1.00zM649.00 216.00h1.00v1.00h-1.00zM649.00 217.00h1.00v1.00h-1.00zM650.00 217.00h1.00v1.00h-1.00zM651.00 217.00h1.00v1.00h-1.00zM651.00 218.00h1.00v1.00h-1.00zM649.00 219.00h1.00v1.00h-1.00zM650.00 219.00h1.00v1.00h-1.00zM651.00 219.00h1.00v1.00h-1.00zM656.00 215.00h1.00v1.00h-1.00zM656.00 216.00h1.00v1.00h-1.00zM655.00 217.00h1.00v1.00h-1.00zM654.00 218.00h1.00v1.00h-1.00zM654.00 219.00h1.00v1.00h-1.00zM659.00 215.00h1.00v1.00h-1.00zM660.00 215.00h1.00v1.00h-1.00zM661.00 215.00h1.00v1.00h-1.00zM659.00 216.00h1.00v1.00h-1.00zM661.00 216.00h1.00v1.00h-1.00zM659.00 217.00h1.00v1.00h-1.00zM660.00 217.00h1.00v1.00h-1.00zM661.00 217.00h1.00v1.00h-1.00zM659.00 218.00h1.00v1.00h-1.00zM661.00 218.00h1.00v1.00h-1.00zM659.00 219.00h1.00v1.00h-1.00zM660.00 219.00h1.00v1.00h-1.00zM661.00 219.00h1.00v1.00h-1.00zM664.00 216.00h1.00v1.00h-1.00zM665.00 216.00h1.00v1.00h-1.00zM664.00 218.00h1.00v1.00h-1.00zM665.00 218.00h1.00v1.00h-1.00zM669.00 215.00h1.00v1.00h-1.00zM670.00 215.00h1.00v1.00h-1.00zM671.00 215.00h1.00v1.00h-1.00zM671.00 216.00h1.00v1.00h-1.00zM669.00 217.00h1.00v1.00h-1.00zM670.00 217.00h1.00v1.00h-1.00zM671.00 217.00h1.00v1.00h-1.00zM671.00 218.00h1.00v1.00h-1.00zM669.00 219.00h1.00v1.00h-1.00zM670.00 219.00h1.00v1.00h-1.00zM671.00 219.00h1.00v1.00h-1.00zM674.00 215.00h1.00v1.00h-1.00zM676.00 215.00h1.00v1.00h-1.00zM674.00 216.00h1.00v1.00h-1.00zM676.00 216.00h1.00v1.00h-1.00zM674.00 217.00h1.00v1.00h-1.00zM675.00 217.00h1.00v1.00h-1.00zM676.00 217.00h1.00v1.00h-1.00zM676.00 218.00h1.00v1.00h-1.00zM676.00 219.00h1.00v1.00h-1.00zM679.00 216.00h1.00v1.00h-1.00zM680.00 216.00h1.00v1.00h-1.00zM679.00 218.00h1.00v1.00h-1.00zM680.00 218.00h1.00v1.00h-1.00zM684.00 215.00h1.00v1.00h-1.00zM685.00 215.00h1.00v1.00h-1.00zM686.00 215.00h1.00v1.00h-1.00zM686.00 216.00h1.00v1.00h-1.00zM684.00 217.00h1.00v1.00h-1.00zM685.00 217.00h1.00v1.00h-1.00zM686.00 217.00h1.00v1.00h-1.00zM684.00 218.00h1.00v1.00h-1.00zM684.00 219.00h1.00v1.00h-1.00zM685.00 219.00h1.00v1.00h-1.00zM686.00 219.00h1.00v1.00h-1.00zM689.00 215.00h1.00v1.00h-1.00zM690.00 215.00h1.00v1.00h-1.00zM691.00 215.00h1.00v1.00h-1.00zM689.00 216.00h1.00v1.00h-1.00zM691.00 216.00h1.00v1.00h-1.00zM689.00 217.00h1.00v1.00h-1.00zM691.00 217.00h1.00v1.00h-1.00zM689.00 218.00h1.00v1.00h-1.00zM691.00 218.00h1.00v1.00h-1.00zM689.00 219.00h1.00v1.00h-1.00zM690.00 219.00h1.00v1.00h-1.00zM691.00 219.00h1.00v1.00h-1.00z" fill="#7c7c7c" fill-opacity="1"/><path d="M700.00 228.00h1.00v1.00h-1.00zM701.00 228.00h1.00v1.00h-1.00zM702.00 228.00h1.00v1.00h-1.00zM700.00 229.00h1.00v1.00h-1.00zM702.00 229.00h1.00v1.00h-1.00zM700.00 230.00h1.00v1.00h-1.00zM702.00 230.00h1.00v1.00h-1.00zM700.00 231.00h1.00v1.00h-1.00zM702.00 231.00h1.00v1.00h-1.00zM700.00 232.00h1.00v1.00h-1.00zM701.00 232.00h1.00v1.00h-1.00zM702.00 232.00h1.00v1.00h-1.00z" fill="#686868" fill-opacity="1"/><path d="M704.50 229.00h1.00v1.00h-1.00zM705.50 229.00h1.00v1.00h-1.00zM704.50 231.00h1.00v1.00h-1.00zM705.50 231.00h1.00v1.00h-1.00z" fill="#686868" fill-opacity="1"/><path d="M708.00 228.00h1.00v1.00h-1.00zM709.00 228.00h1.00v1.00h-1.00zM710.00 228.00h1.00v1.00h-1.00zM708.00 229.00h1.00v1.00h-1.00zM710.00 229.00h1.00v1.00h-1.00zM708.00 230.00h1.00v1.00h-1.00zM710.00 230.00h1.00v1.00h-1.00zM708.00 231.00h1.00v1.00h-1.00zM710.00 231.00h1.00v1.00h-1.00zM708.00 232.00h1.00v1.00h-1.00zM709.00 232.00h1.00v1.00h-1.00zM710.00 232.00h1.00v1.00h-1.00z" fill="#686868" fill-opacity="1"/><path d="M713.00 228.00h1.00v1.00h-1.00zM714.00 228.00h1.00v1.00h-1.00zM715.00 228.00h1.00v1.00h-1.00zM713.00 229.00h1.00v1.00h-1.00zM715.00 229.00h1.00v1.00h-1.00zM713.00 230.00h1.00v1.00h-1.00zM714.00 230.00h1.00v1.00h-1.00zM715.00 230.00h1.00v1.00h-1.00zM713.00 231.00h1.00v1.00h-1.00zM715.00 231.00h1.00v1.00h-1.00zM713.00 232.00h1.00v1.00h-1.00zM714.00 232.00h1.00v1.00h-1.00zM715.00 232.00h1.00v1.00h-1.00z" fill="#686868" fill-opacity="1"/><path d="M629.00 230.00h1.00v1.00h-1.00zM631.00 230.00h1.00v1.00h-1.00zM628.00 231.00h1.00v1.00h-1.00zM630.00 231.00h1.00v1.00h-1.00zM629.00 232.00h1.00v1.00h-1.00zM631.00 232.00h1.00v1.00h-1.00z" fill="#ececec" fill-opacity="1"/><path d="M637.00 230.00h1.00v1.00h-1.00zM638.00 231.00h1.00v1.00h-1.00zM637.00 232.00h1.00v1.00h-1.00z" fill="#ececec" fill-opacity="1"/><path d="M645.00 230.00h1.00v1.00h-1.00zM647.00 230.00h1.00v1.00h-1.00zM645.00 231.00h1.00v1.00h-1.00zM647.00 231.00h1.00v1.00h-1.00zM645.00 232.00h1.00v1.00h-1.00zM647.00 232.00h1.00v1.00h-1.00z" fill="#ececec" fill-opacity="1"/><path d="M654.00 229.50h1.00v1.00h-1.00zM655.00 229.50h1.00v1.00h-1.00zM656.00 229.50h1.00v1.00h-1.00zM657.00 229.50h1.00v1.00h-1.00zM654.00 230.50h1.00v1.00h-1.00zM657.00 230.50h1.00v1.00h-1.00zM654.00 231.50h1.00v1.00h-1.00zM657.00 231.50h1.00v1.00h-1.00zM654.00 232.50h1.00v1.00h-1.00zM655.00 232.50h1.00v1.00h-1.00zM656.00 232.50h1.00v1.00h-1.00zM657.00 232.50h1.00v1.00h-1.00z" fill="#ececec" fill-opacity="1"/><path d="M663.00 230.00h1.00v1.00h-1.00zM665.00 230.00h1.00v1.00h-1.00zM664.00 231.00h1.00v1.00h-1.00zM666.00 231.00h1.00v1.00h-1.00zM663.00 232.00h1.00v1.00h-1.00zM665.00 232.00h1.00v1.00h-1.00z" fill="#ececec" fill-opacity="1"/><path d="M673.00 229.50h1.00v1.00h-1.00zM672.00 230.50h1.00v1.00h-1.00zM674.00 230.50h1.00v1.00h-1.00zM673.00 231.50h1.00v1.00h-1.00zM672.00 232.50h1.00v1.00h-1.00zM674.00 232.50h1.00v1.00h-1.00z" fill="#ececec" fill-opacity="1"/></svg>

<div class="a" style="left:728px;top:220px;width:22px;height:13px;background:linear-gradient(#e0e0e0,#c4c4c4);border-radius:2px;box-shadow:0 0 0 1px rgba(0,0,0,0.12);font-size:8px;font-weight:bold;color:#333;line-height:13px;text-align:center">LIST</div>
<div class="a" style="left:496px;top:238.5px;width:276px;height:2px;background:#1e1e1e"></div><div class="a" style="left:496px;top:240.5px;width:276px;height:2px;background:#454545"></div>

<!-- DOLPHIN -->
<div class="a" style="left:53px;top:290px;width:719px;height:320px;border-radius:3px 3px 3px 3px;box-shadow:0 0 0 1px rgba(20,10,5,0.45),0 1px 5px rgba(0,0,0,0.4)"></div>
<div id="dw" class="a" style="left:53px;top:290px;width:719px;height:320px;border-radius:3px 3px 3px 3px;overflow:hidden;background:#3a3a3a">
  <div class="a" style="left:0;top:0;width:719px;height:44px;background:linear-gradient(#484848,#323232);border-top:1px solid #5a5a5a"></div>
  <div class="a" style="left:0;top:43px;width:719px;height:2px;background:#1a1a1a"></div>
  <!-- title icon -->
  <svg class="a" style="left:6px;top:6px" width="12" height="10" viewBox="0 0 12 10"><defs><linearGradient id="tfg" x1="0" y1="0" x2="0" y2="1"><stop offset="0" stop-color="#9a9a9a"/><stop offset="1" stop-color="#787878"/></linearGradient></defs><path d="M0 0h5l1.2 1.5H12V10H0z" fill="url(#tfg)"/></svg>
  <div class="a" style="left:25px;top:3px;font-size:12px;color:#ececec;line-height:16px;text-shadow:0 0 0.4px #fff">anton &ndash; Dolphin</div>
  <!-- menu -->
  <div class="a menu" style="left:11px;top:25px"><u>A</u>rkiv</div>
  <div class="a menu" style="left:50px;top:25px"><u>R</u>edigera</div>
  <div class="a menu" style="left:109px;top:25px"><u>V</u>isa</div>
  <div class="a menu" style="left:145px;top:25px"><u>G</u>å</div>
  <div class="a menu" style="left:173px;top:25px">Verk<u>t</u>yg</div>
  <div class="a menu" style="left:228px;top:25px">In<u>s</u>tällningar</div>
  <div class="a menu" style="left:305px;top:25px"><u>H</u>jälp</div>
  <!-- window buttons -->
  <div class="a wb" style="left:669px;top:5px"><svg class="a" style="left:3px;top:3px" width="7" height="5" viewBox="0 0 7 5"><path d="M0.7 1L3.5 3.6L6.3 1" stroke="#888" stroke-width="1.3" fill="none"/></svg></div>
  <div class="a wb" style="left:684px;top:5px"><svg class="a" style="left:3px;top:3px" width="7" height="5" viewBox="0 0 7 5"><path d="M0.7 4L3.5 1.4L6.3 4" stroke="#888" stroke-width="1.3" fill="none"/></svg></div>
  <div class="a wb" style="left:699px;top:5px;width:15px"><svg class="a" style="left:4px;top:2px" width="7" height="7" viewBox="0 0 7 7"><path d="M0.5 0.5L6.5 6.5M6.5 0.5L0.5 6.5" stroke="#888" stroke-width="1.3" fill="none"/></svg></div>
  <!-- toolbar -->
  <div class="a" style="left:0;top:45px;width:719px;height:28px;background:linear-gradient(#d8d8d8,#c2c2c2);border-top:1px solid #e2e2e2"></div>
  <div class="a" style="left:0;top:73px;width:719px;height:1px;background:#999"></div>
  <!-- breadcrumb -->
  <div class="a" style="left:0;top:74px;width:719px;height:26px;background:#adadad;overflow:hidden">
    <div class="a" style="left:269px;top:-55px;width:198px;height:198px;border-radius:50%;border:31px solid rgba(255,255,255,0.09)"></div>
    <div class="a" style="left:489px;top:-57px;width:210px;height:210px;border-radius:50%;border:13px solid rgba(255,255,255,0.09)"></div>
    <div class="a" style="left:506px;top:-40px;width:176px;height:176px;border-radius:50%;border:13px solid rgba(255,255,255,0.09)"></div>
  </div>
  <div class="a" style="left:0;top:100px;width:719px;height:1px;background:#a4a4a4"></div>
  <!-- content -->
  <div class="a" style="left:0;top:101px;width:719px;height:190px;background:#cecece;border-left:2px solid #b4b4b4"></div>
  <!-- status -->
  <div class="a" style="left:0;top:290px;width:719px;height:1px;background:#999"></div>
  <div class="a" style="left:0;top:291px;width:719px;height:25px;background:linear-gradient(#ababab,#9e9e9e)"></div>
  <div class="a" style="left:0;top:316px;width:719px;height:4px;background:#404040"></div>
</div>

<svg width="0" height="0" style="position:absolute"><defs><linearGradient id="fg" x1="0" y1="0" x2="0" y2="1"><stop offset="0" stop-color="#3b3b3b"/><stop offset="1" stop-color="#282828"/></linearGradient></defs></svg>
<svg class="a" style="left:104px;top:399px" width="44" height="38" viewBox="0 0 44 38"><path d="M1 0h15l3 3h24v6H1z" fill="#a9a9a9"/><path d="M0 6H44V35Q44 37 42 37H2Q0 37 0 35Z" fill="url(#fg)"/></svg>
<div class="a lbl" style="left:76px;top:445px">Bilder</div>
<svg class="a" style="left:242.9px;top:399px" width="44" height="38" viewBox="0 0 44 38"><path d="M1 0h15l3 3h24v6H1z" fill="#a9a9a9"/><path d="M0 6H44V35Q44 37 42 37H2Q0 37 0 35Z" fill="url(#fg)"/></svg>
<div class="a lbl" style="left:214.9px;top:445px">Downloads</div>
<svg class="a" style="left:381.8px;top:399px" width="44" height="38" viewBox="0 0 44 38"><path d="M1 0h15l3 3h24v6H1z" fill="#a9a9a9"/><path d="M0 6H44V35Q44 37 42 37H2Q0 37 0 35Z" fill="url(#fg)"/></svg>
<div class="a lbl" style="left:353.8px;top:445px">Etc</div>
<svg class="a" style="left:520.7px;top:399px" width="44" height="38" viewBox="0 0 44 38"><path d="M1 0h15l3 3h24v6H1z" fill="#a9a9a9"/><path d="M0 6H44V35Q44 37 42 37H2Q0 37 0 35Z" fill="url(#fg)"/></svg>
<div class="a lbl" style="left:492.7px;top:445px">Musik</div>
<svg class="a" style="left:659.6px;top:399px" width="44" height="38" viewBox="0 0 44 38"><path d="M1 0h15l3 3h24v6H1z" fill="#a9a9a9"/><path d="M0 6H44V35Q44 37 42 37H2Q0 37 0 35Z" fill="url(#fg)"/></svg>
<div class="a lbl" style="left:631.6px;top:445px">My Games</div>
<svg class="a" style="left:104px;top:493px" width="44" height="38" viewBox="0 0 44 38"><path d="M1 0h15l3 3h24v6H1z" fill="#a9a9a9"/><path d="M0 6H44V35Q44 37 42 37H2Q0 37 0 35Z" fill="url(#fg)"/></svg>
<div class="a lbl" style="left:76px;top:539px">Podcasts</div>
<svg class="a" style="left:242.9px;top:493px" width="44" height="38" viewBox="0 0 44 38"><path d="M1 0h15l3 3h24v6H1z" fill="#a9a9a9"/><path d="M0 6H44V35Q44 37 42 37H2Q0 37 0 35Z" fill="url(#fg)"/></svg>
<div class="a lbl" style="left:214.9px;top:539px">Public</div>
<svg class="a" style="left:381.8px;top:493px" width="44" height="38" viewBox="0 0 44 38"><path d="M1 0h15l3 3h24v6H1z" fill="#a9a9a9"/><path d="M0 6H44V35Q44 37 42 37H2Q0 37 0 35Z" fill="url(#fg)"/></svg>
<div class="a lbl" style="left:353.8px;top:539px">Ubuntu One</div>
<svg class="a" style="left:520.7px;top:493px" width="44" height="38" viewBox="0 0 44 38"><path d="M1 0h15l3 3h24v6H1z" fill="#a9a9a9"/><path d="M0 6H44V35Q44 37 42 37H2Q0 37 0 35Z" fill="url(#fg)"/></svg>
<div class="a lbl" style="left:492.7px;top:539px">Video</div>
<div class="a" style="left:56px;top:587px;font-size:12px;color:#2e2a26;line-height:14px">9 kataloger</div>


<!-- toolbar icons -->
<svg class="a" style="left:62px;top:340px" width="17" height="18" viewBox="0 0 17 18"><path d="M0 9L14 0V6H16V12H14V18Z" fill="#505050"/></svg>
<svg class="a" style="left:93px;top:340px" width="17" height="18" viewBox="0 0 17 18"><path d="M16 9L2 0V6H0V12H2V18Z" fill="#8e8e8e"/></svg>
<svg class="a" style="left:127px;top:344px" width="10" height="8" viewBox="0 0 10 8"><path d="M5 0L9.5 7H0.5Z" fill="#4a4a4a"/></svg>
<!-- breadcrumb -->
<svg class="a" style="left:60px;top:372px" width="12" height="10" viewBox="0 0 12 10"><path d="M0 0h5l1 1.5h6V10H0z" fill="#3a3a3a"/></svg>
<svg class="a" style="left:83px;top:373px" width="5" height="8" viewBox="0 0 5 8"><path d="M0 0L4.5 4L0 8Z" fill="#222"/></svg>
<div class="a" style="left:100px;top:370px;font-size:11px;font-weight:bold;color:#1e1a18;line-height:14px">Hem</div>
<!-- capacity -->
<div class="a" style="left:573px;top:586px;width:198px;height:15px;background:#8e8e8e;border-radius:2px"></div>
<div class="a" style="left:573px;top:586px;width:96px;height:15px;background:#626262;border:1px solid #4a4a4a;border-radius:2px"></div>
<div class="a" style="left:627px;top:586px;font-size:11.6px;color:#1e1a18;line-height:14px">37,3 Gibyte ledigt</div>
<div class="a" style="left:573px;top:586px;width:96px;height:15px;overflow:hidden"><div class="a" style="left:54px;top:0px;font-size:11.6px;color:#f2f2f2;line-height:14px;white-space:nowrap">37,3 Gibyte ledigt</div></div>

<div id="taskbar" class="a"></div>

<div class="a" style="left:560px;top:675px;width:160px;height:25px;background:linear-gradient(#343434,#2a2a2a);border-left:1px solid #262626;box-shadow:inset 1px 0 0 #3c3c3c"></div>
<div class="a" style="left:720px;top:675px;width:80px;height:25px;background:linear-gradient(#444,#383838);border-left:1px solid #222"></div>
<div class="a" style="left:567px;top:682px;width:12px;height:12px;border-radius:50%;background:#1a1a1a"></div>
<div class="a" style="left:572.2px;top:684.6px;width:1.6px;height:1.6px;background:#d0d0d0"></div>
<div class="a" style="left:572.2px;top:687.4px;width:1.6px;height:3.4px;background:#d0d0d0"></div>
<svg class="a" style="left:595px;top:682px" width="15" height="14" viewBox="0 0 15 14"><defs><linearGradient id="tg" x1="0" y1="0" x2="0" y2="1"><stop offset="0" stop-color="#f2f2f2"/><stop offset="1" stop-color="#b8b8b8"/></linearGradient></defs><path d="M4 1Q4 0 5 0H10Q11 0 11 1V8H14.5L7.5 14L0.5 8H4Z" fill="url(#tg)"/></svg>
<svg class="a" style="left:621px;top:682px" width="18" height="14" viewBox="0 0 18 14"><path d="M2 0H15Q17 0 17 2V13L15 11.5H2Q0 11.5 0 9.5V2Q0 0 2 0Z" fill="url(#tg)"/></svg>
<svg class="a" style="left:652px;top:681px" width="14" height="16" viewBox="0 0 14 16"><path d="M0.5 1H12.5V14H0.5Z M2.5 3V12H10.5V3Z" fill="#e2e2e2" fill-rule="evenodd"/><rect x="5.5" y="8" width="7" height="7" fill="#c6c6c6" stroke="#1c1c1c" stroke-width="0.6"/></svg>
<svg class="a" style="left:677px;top:681px" width="18" height="15" viewBox="0 0 18 15"><path d="M0.5 5Q0.5 4.5 1.5 4.5H3.5L8.2 1V14L3.5 10.5H1.5Q0.5 10.5 0.5 10Z" fill="url(#tg)"/><rect x="9.2" y="5" width="1.8" height="5" fill="#e0e0e0"/><rect x="12" y="3" width="2" height="9" fill="#e0e0e0"/><rect x="15" y="1" width="2" height="13" fill="#e0e0e0"/></svg>
<div class="a" style="left:705px;top:682px;width:12px;height:12px;border-radius:50%;background:#1a1a1a"></div>
<svg class="a" style="left:708px;top:685px" width="6" height="6" viewBox="0 0 6 6"><path d="M3 0.5L5.5 3H0.5Z" fill="#ddd"/><rect x="0.5" y="4" width="5" height="1.3" fill="#ddd"/></svg>
<svg class="a" style="left:726px;top:679px" width="22" height="17" viewBox="0 0 22 17"><rect x="0.5" y="0.5" width="21" height="16" rx="1.5" fill="#a8a8a8" stroke="#8a8a8a"/><path d="M1 1.5L11 9L21 1.5M1 16L8 7.5M21 16L14 7.5" stroke="#868686" stroke-width="1" fill="none"/></svg>
<div class="a" style="left:755px;top:677px;font-size:18.4px;font-weight:bold;color:#dde7f3;line-height:21px;transform:scaleX(0.925);transform-origin:0 0">00.47</div>

</body></html>
